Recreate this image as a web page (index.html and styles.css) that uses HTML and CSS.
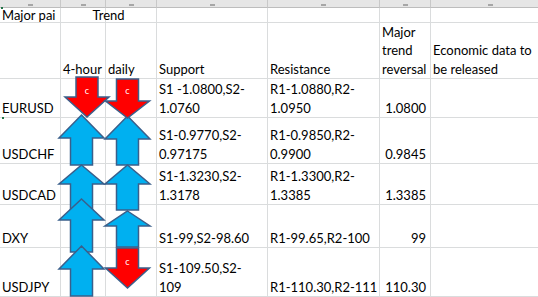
FILE: index.html
```html
<!DOCTYPE html>
<html>
<head>
<meta charset="utf-8">
<link rel="stylesheet" href="styles.css">
</head>
<body>
<div class="sheet">
  <div class="hd"><span class="tick"></span></div>
  <div class="hd"><span class="tick"></span></div>
  <div class="hd"><span class="tick"></span></div>
  <div class="hd"><span class="tick"></span></div>
  <div class="hd"><span class="tick"></span></div>
  <div class="hd"><span class="tick"></span></div>
  <div class="hd"><span class="tick"></span></div>

  <div class="c r1">Major pai</div>
  <div class="c r1 trend">Trend</div>
  <div class="c r1"></div>
  <div class="c r1"></div>
  <div class="c r1"></div>
  <div class="c r1"></div>

  <div class="c"></div>
  <div class="c">4-hour</div>
  <div class="c">daily</div>
  <div class="c">Support</div>
  <div class="c">Resistance</div>
  <div class="c">Major<br>trend<br>reversal</div>
  <div class="c">Economic data to<br>be released</div>

  <div class="c">EURUSD</div>
  <div class="c"></div>
  <div class="c"></div>
  <div class="c">S1 -1.0800,S2-<br>1.0760</div>
  <div class="c">R1-1.0880,R2-<br>1.0950</div>
  <div class="c num">1.0800</div>
  <div class="c"></div>

  <div class="c">USDCHF</div>
  <div class="c"></div>
  <div class="c"></div>
  <div class="c">S1-0.9770,S2-<br>0.97175</div>
  <div class="c">R1-0.9850,R2-<br>0.9900</div>
  <div class="c num">0.9845</div>
  <div class="c"></div>

  <div class="c">USDCAD</div>
  <div class="c"></div>
  <div class="c"></div>
  <div class="c">S1-1.3230,S2-<br>1.3178</div>
  <div class="c">R1-1.3300,R2-<br>1.3385</div>
  <div class="c num">1.3385</div>
  <div class="c"></div>

  <div class="c">DXY</div>
  <div class="c"></div>
  <div class="c"></div>
  <div class="c">S1-99,S2-98.60</div>
  <div class="c">R1-99.65,R2-100</div>
  <div class="c num">99</div>
  <div class="c"></div>

  <div class="c">USDJPY</div>
  <div class="c"></div>
  <div class="c"></div>
  <div class="c">S1-109.50,S2-<br>109</div>
  <div class="c">R1-110.30,R2-111</div>
  <div class="c num">110.30</div>
  <div class="c"></div>

  <span class="sel sel1"></span>
  <span class="sel sel2"></span>

  <svg class="shapes" width="538" height="297" viewBox="0 0 538 297">
    <g class="up">
      <polygon points="81.5,115 104,138 92.5,138 92.5,165 70.5,165 70.5,138 59,138"/>
      <polygon points="127.5,116 150,139 138.5,139 138.5,165 116.5,165 116.5,139 105,139"/>
      <polygon points="81.5,165 104,184 92.5,184 92.5,214 70.5,214 70.5,184 59,184"/>
      <polygon points="127.5,165 150,184 138.5,184 138.5,210 116.5,210 116.5,184 105,184"/>
      <polygon points="81.5,199 104,220 92.5,220 92.5,252 70.5,252 70.5,220 59,220"/>
      <polygon points="127.5,211 150,226 138.5,226 138.5,247 116.5,247 116.5,226 105,226"/>
      <polygon points="81.5,246 104,269 92.5,269 92.5,296 70.5,296 70.5,269 59,269"/>
    </g>
    <g class="down">
      <polygon points="76,77 98,77 98,97 109,97 87,117 65,97 76,97"/>
      <polygon points="116.5,79 138.5,79 138.5,101 149.5,101 127.5,118 105.5,101 116.5,101"/>
      <polygon points="116.5,248 138.5,248 138.5,268 149.5,268 127.5,288 105.5,268 116.5,268"/>
    </g>
    <g class="lbl">
      <text x="87" y="94">c</text>
      <text x="127.5" y="94">c</text>
      <text x="127.5" y="265">c</text>
    </g>
  </svg>
</div>
</body>
</html>
```

FILE: styles.css
```css
html, body {
  margin: 0;
  padding: 0;
  background: #ffffff;
  overflow: hidden;
}

.sheet {
  position: relative;
  display: grid;
  grid-template-columns: 61px 45px 51px 111px 112px 51px 120px;
  grid-template-rows: 8px 15px 56px 39px 46px 41px 43px 49px;
  width: 551px;
  font-family: Lato, "Liberation Sans", sans-serif;
  font-size: 13px;
  line-height: 18.5px;
  color: #000;
}

.hd {
  box-sizing: border-box;
  background: #e6e6e6;
  border-right: 1px solid #c8c8c8;
  border-bottom: 1px solid #bdbdbd;
  display: flex;
  justify-content: center;
  align-items: flex-end;
}

.tick {
  width: 5px;
  height: 2px;
  margin-bottom: 1px;
  background: #a6a6a6;
}

.c {
  box-sizing: border-box;
  border-right: 1px solid #dadcdd;
  border-bottom: 1px solid #dadcdd;
  display: flex;
  align-items: flex-end;
  padding: 0 2px 0 2px;
  white-space: nowrap;
  overflow: hidden;
}

.r1 {
  line-height: 14px;
  align-items: center;
}

.trend {
  grid-column: span 2;
  justify-content: center;
  background: linear-gradient(to right, transparent 44px, #dadcdd 44px, #dadcdd 45px, transparent 45px);
}

.num {
  justify-content: flex-end;
  padding-right: 4px;
}

.sel {
  position: absolute;
  width: 2px;
  height: 2px;
  background: #217346;
}
.sel1 { left: 1px; top: 7px; }
.sel2 { left: 2px; top: 117px; }

.shapes {
  position: absolute;
  left: 0;
  top: 0;
  pointer-events: none;
}

.up polygon {
  fill: #00b0f0;
  stroke: #3a5f8b;
  stroke-width: 1.5;
  stroke-linejoin: miter;
}

.down polygon {
  fill: #ff0000;
  stroke: #3a5f8b;
  stroke-width: 1.5;
}

.lbl text {
  fill: #ffffff;
  font-family: Lato, "Liberation Sans", sans-serif;
  font-size: 9px;
  text-anchor: middle;
}
```
